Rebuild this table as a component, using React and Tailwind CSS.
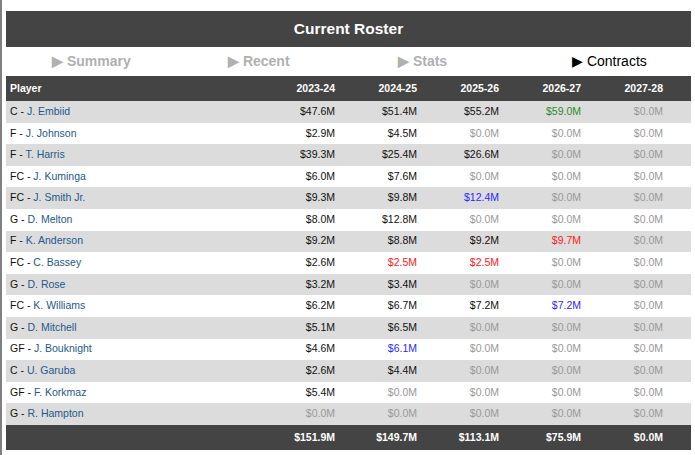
const rows = [
  ["C", "J. Embiid", [["$47.6M", "k"], ["$51.4M", "k"], ["$55.2M", "k"], ["$59.0M", "g"], ["$0.0M", "z"]]],
  ["F", "J. Johnson", [["$2.9M", "k"], ["$4.5M", "k"], ["$0.0M", "z"], ["$0.0M", "z"], ["$0.0M", "z"]]],
  ["F", "T. Harris", [["$39.3M", "k"], ["$25.4M", "k"], ["$26.6M", "k"], ["$0.0M", "z"], ["$0.0M", "z"]]],
  ["FC", "J. Kuminga", [["$6.0M", "k"], ["$7.6M", "k"], ["$0.0M", "z"], ["$0.0M", "z"], ["$0.0M", "z"]]],
  ["FC", "J. Smith Jr.", [["$9.3M", "k"], ["$9.8M", "k"], ["$12.4M", "b"], ["$0.0M", "z"], ["$0.0M", "z"]]],
  ["G", "D. Melton", [["$8.0M", "k"], ["$12.8M", "k"], ["$0.0M", "z"], ["$0.0M", "z"], ["$0.0M", "z"]]],
  ["F", "K. Anderson", [["$9.2M", "k"], ["$8.8M", "k"], ["$9.2M", "k"], ["$9.7M", "r"], ["$0.0M", "z"]]],
  ["FC", "C. Bassey", [["$2.6M", "k"], ["$2.5M", "r"], ["$2.5M", "r"], ["$0.0M", "z"], ["$0.0M", "z"]]],
  ["G", "D. Rose", [["$3.2M", "k"], ["$3.4M", "k"], ["$0.0M", "z"], ["$0.0M", "z"], ["$0.0M", "z"]]],
  ["FC", "K. Williams", [["$6.2M", "k"], ["$6.7M", "k"], ["$7.2M", "k"], ["$7.2M", "b"], ["$0.0M", "z"]]],
  ["G", "D. Mitchell", [["$5.1M", "k"], ["$6.5M", "k"], ["$0.0M", "z"], ["$0.0M", "z"], ["$0.0M", "z"]]],
  ["GF", "J. Bouknight", [["$4.6M", "k"], ["$6.1M", "b"], ["$0.0M", "z"], ["$0.0M", "z"], ["$0.0M", "z"]]],
  ["C", "U. Garuba", [["$2.6M", "k"], ["$4.4M", "k"], ["$0.0M", "z"], ["$0.0M", "z"], ["$0.0M", "z"]]],
  ["GF", "F. Korkmaz", [["$5.4M", "k"], ["$0.0M", "z"], ["$0.0M", "z"], ["$0.0M", "z"], ["$0.0M", "z"]]],
  ["G", "R. Hampton", [["$0.0M", "z"], ["$0.0M", "z"], ["$0.0M", "z"], ["$0.0M", "z"], ["$0.0M", "z"]]],
];

const colorClass = {
  k: "text-[#111111]",
  z: "text-[#999999]",
  g: "text-[#2e8b2e]",
  r: "text-[#ff2020]",
  b: "text-[#2a2aff]",
};

const years = ["2023-24", "2024-25", "2025-26", "2026-27", "2027-28"];
const totals = ["$151.9M", "$149.7M", "$113.1M", "$75.9M", "$0.0M"];

export default function App() {
  return (
    <div className="w-[695px] h-[455px] bg-white flex" style={{ fontFamily: "'Liberation Sans', Arial, sans-serif" }}>
      <div className="w-[2px] bg-[#808080] shrink-0" />
      <div className="w-[685px] ml-[4px] pt-[11px] flex flex-col">
        <div className="h-[36px] bg-[#444444] flex items-center justify-center text-white font-bold text-[15.5px]">
          Current Roster
        </div>
        <div className="h-[29px] flex items-center text-[14px]">
          <div className="w-[176px] pl-[46px] font-bold text-[#b0b0b0]">▶ Summary</div>
          <div className="w-[170px] pl-[46px] font-bold text-[#b0b0b0]">▶ Recent</div>
          <div className="w-[174px] pl-[46px] font-bold text-[#b0b0b0]">▶ Stats</div>
          <div className="flex-1 pl-[46px] text-black">▶ Contracts</div>
        </div>
        <div className="h-[25px] bg-[#444444] grid grid-cols-[275px_82px_82px_82px_82px_82px] items-center text-white font-bold text-[10.5px]">
          <div className="pl-[4px]">Player</div>
          {years.map((y) => (
            <div key={y} className="text-right pr-[28px]">{y}</div>
          ))}
        </div>
        {rows.map(([pos, name, vals], i) => (
          <div
            key={name}
            className={`h-[21.6px] grid grid-cols-[275px_82px_82px_82px_82px_82px] items-center text-[10.5px] ${i % 2 === 0 ? "bg-[#dcdcdc]" : "bg-white"}`}
          >
            <div className="pl-[4px] text-[#111111]">
              {pos} - <span className="text-[#24598c]">{name}</span>
            </div>
            {vals.map(([v, c], j) => (
              <div key={j} className={`text-right pr-[28px] ${colorClass[c]}`}>{v}</div>
            ))}
          </div>
        ))}
        <div className="h-[25px] bg-[#444444] grid grid-cols-[275px_82px_82px_82px_82px_82px] items-center text-white font-bold text-[10.5px]">
          <div />
          {totals.map((t, j) => (
            <div key={j} className="text-right pr-[28px]">{t}</div>
          ))}
        </div>
      </div>
    </div>
  );
}
